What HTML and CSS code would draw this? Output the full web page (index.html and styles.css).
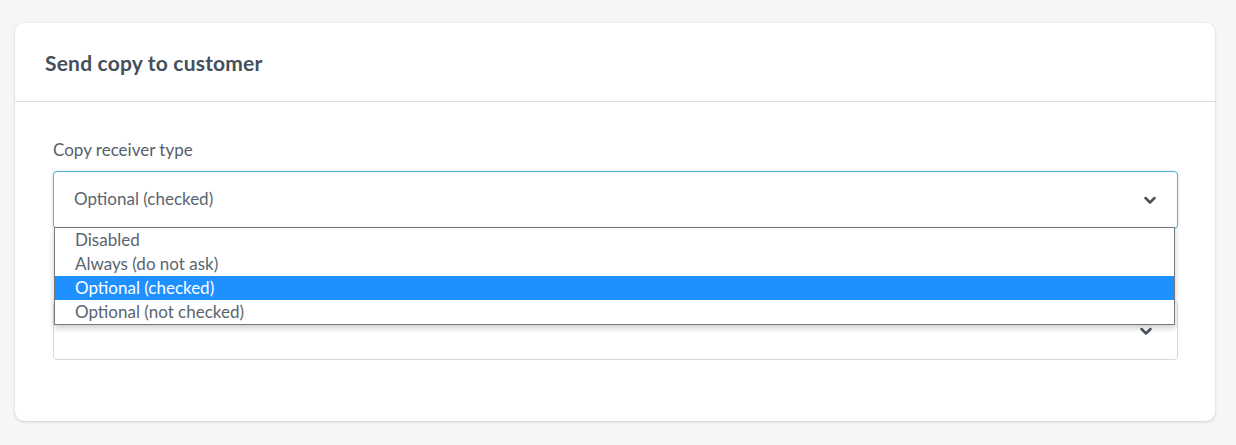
FILE: index.html
```html
<!DOCTYPE html>
<html lang="en">
<head>
<meta charset="utf-8">
<title>Send copy to customer</title>
<link rel="stylesheet" href="styles.css">
</head>
<body>
<div class="page">
  <section class="card">
    <header class="card-header">
      <h2 class="card-title">Send copy to customer</h2>
    </header>
    <div class="card-body">
      <div class="form-group">
        <label class="form-label">Copy receiver type</label>
        <div class="select-wrap">
          <div class="select is-focused">
            <span class="select-value">Optional (checked)</span>
            <svg class="chevron" width="14" height="9" viewBox="0 0 14 9"><path d="M2.5 2l4.5 4.5 4.5-4.5" fill="none" stroke="#48525e" stroke-width="2.5" stroke-linecap="round" stroke-linejoin="round"/></svg>
          </div>
          <ul class="dropdown">
            <li class="option">Disabled</li>
            <li class="option">Always (do not ask)</li>
            <li class="option is-selected">Optional (checked)</li>
            <li class="option">Optional (not checked)</li>
          </ul>
        </div>
      </div>
      <div class="form-group second">
        <div class="select">
          <span class="select-value"></span>
          <svg class="chevron chevron-2" width="14" height="9" viewBox="0 0 14 9"><path d="M2.5 2l4.5 4.5 4.5-4.5" fill="none" stroke="#48525e" stroke-width="2.5" stroke-linecap="round" stroke-linejoin="round"/></svg>
        </div>
      </div>
    </div>
  </section>
</div>
</body>
</html>
```

FILE: styles.css
```css
* { box-sizing: border-box; }
html, body { margin: 0; padding: 0; }
body {
  background: #f5f6f8;
  font-family: Lato, "Noto Sans", sans-serif;
  color: #4a5563;
}
.page {
  padding: 23px 21px 24px 15px;
}
.card {
  background: #fff;
  border-radius: 9px;
  box-shadow: 0 1px 3px rgba(0,0,0,0.16), 0 0 1px rgba(0,0,0,0.08);
  height: 398px;
}
.card-header {
  height: 79px;
  border-bottom: 1px solid #d9dde1;
  padding: 0 30px;
  display: flex;
  align-items: center;
}
.card-title {
  margin: 0;
  font-size: 21px;
  font-weight: 700;
  color: #444f5b;
  letter-spacing: 0.2px;
  padding-top: 0;
}
.card-body {
  padding: 38px 37px 0 38px;
}
.form-group { position: relative; }
.form-label {
  display: block;
  font-size: 17px;
  color: #56606b;
  line-height: 20px;
  margin-bottom: 11px;
}
.select-wrap { position: relative; }
.select {
  height: 58px;
  border: 1px solid #d5d9de;
  border-radius: 4px;
  display: flex;
  align-items: center;
  justify-content: space-between;
  padding: 0 20px;
  background: #fff;
}
.select.is-focused {
  border-color: #5ab3d6;
  box-shadow: 0 0 3px rgba(90,179,214,0.35);
}
.select-value {
  font-size: 17px;
  color: #5a6470;
  padding-bottom: 3px;
}
.chevron-2 { margin-right: 4px; }
.second { margin-top: 73px; }
.dropdown {
  position: absolute;
  z-index: 5;
  top: 56px;
  left: 1px;
  right: 3px;
  margin: 0;
  padding: 0;
  list-style: none;
  background: #fff;
  border: 1px solid #777;
  box-shadow: 0 3px 6px rgba(0,0,0,0.2);
}
.option {
  height: 24px;
  line-height: 23px;
  padding-left: 20px;
  font-size: 17px;
  color: #5a6470;
}
.option.is-selected {
  background: #1e90ff;
  color: #fff;
}
```
